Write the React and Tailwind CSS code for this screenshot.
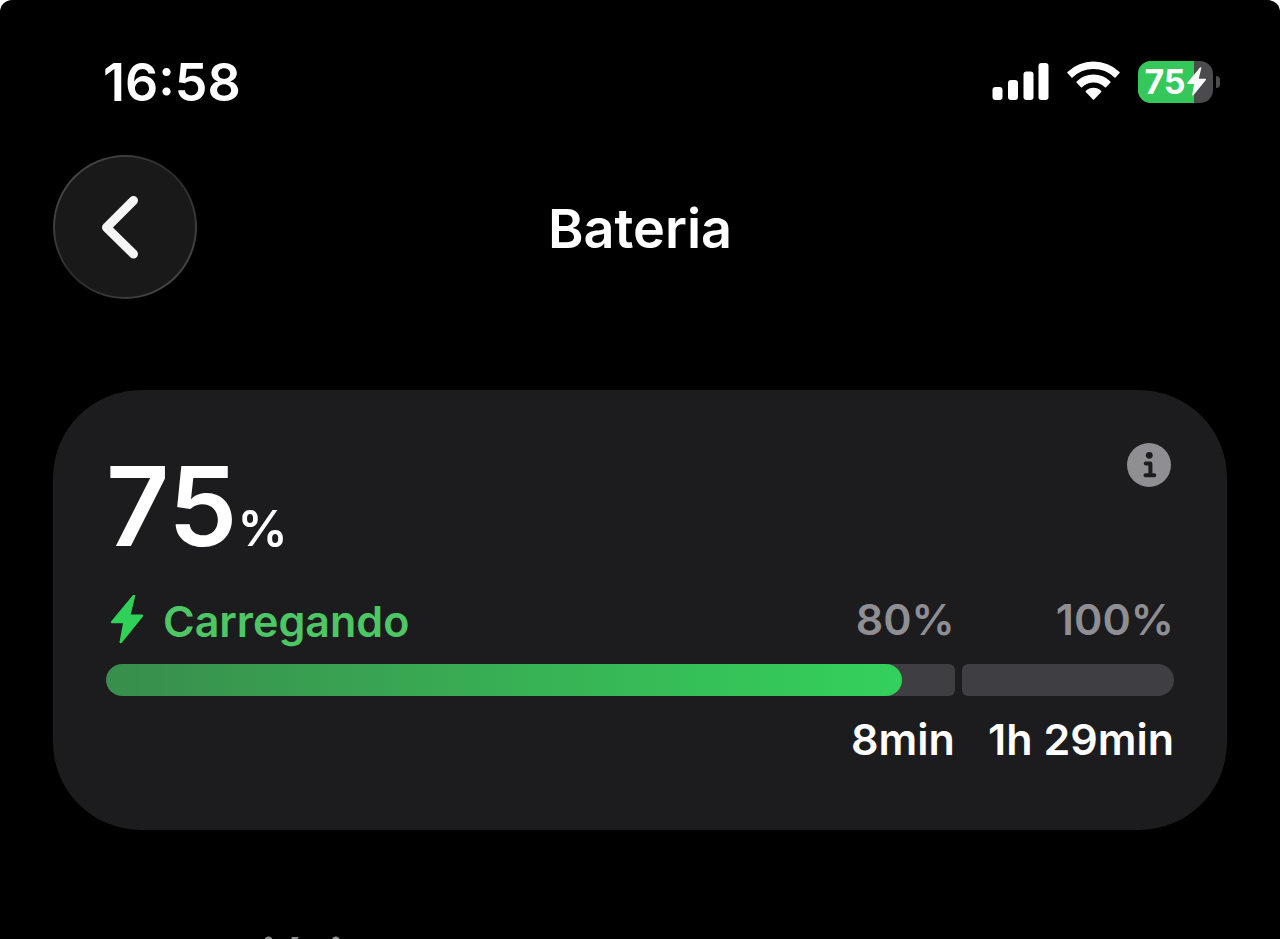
import React from 'react';

const battery = {
    level: 75,
    targets: [
        { limit: 80, time: '8min' },
        { limit: 100, time: '1h 29min' },
    ],
};

function SignalIcon() {
    return (
        <svg width="57" height="40" viewBox="0 0 57 40" fill="currentColor" aria-hidden="true">
            <rect x="0.5" y="25" width="10" height="13" rx="3" />
            <rect x="16" y="18" width="10" height="20" rx="3" />
            <rect x="31.5" y="9.5" width="10" height="28.5" rx="3" />
            <rect x="46.5" y="1" width="10" height="37" rx="3" />
        </svg>
    );
}

function WifiIcon() {
    return (
        <svg
            width="53"
            height="42"
            viewBox="0 0 53 42"
            fill="currentColor"
            stroke="currentColor"
            strokeWidth="1.5"
            strokeLinejoin="round"
            aria-hidden="true"
        >
            <path d="M1 11.6A36.7 36.7 0 0 1 52 11.6L48 15.9A31 31 0 0 0 5 15.9Z" />
            <path d="M10.1 21A23.6 23.6 0 0 1 42.9 21L38.5 25.8A17 17 0 0 0 14.5 25.8Z" />
            <path d="M19.3 30.5A10.3 10.3 0 0 1 33.7 30.5L26.5 38Z" />
        </svg>
    );
}

function BoltIcon({ className }) {
    return (
        <svg
            className={className}
            viewBox="0 3 36 50"
            fill="currentColor"
            stroke="currentColor"
            strokeWidth="2.5"
            strokeLinejoin="round"
            aria-hidden="true"
        >
            <path d="M25 3.8 3.2 30H15.5L11.8 50 33 23.8H20.2Z" />
        </svg>
    );
}

function BatteryBadge({ level }) {
    return (
        <div className="flex items-center gap-[3px]">
            <div className="relative h-[42px] w-[75px] overflow-hidden rounded-[13px] bg-[#4b4b4d]">
                <div className="h-full bg-[#34c759]" style={{ width: `${level}%` }} />
                <div className="absolute inset-0 flex items-center justify-center">
                    <span className="text-[34px] leading-none font-bold">{level}</span>
                    <BoltIcon className="h-[30px] w-[21px]" />
                </div>
            </div>
            <div className="h-3 w-1 rounded-r-full bg-[#4b4b4d]" />
        </div>
    );
}

function StatusBar() {
    return (
        <div className="flex items-center justify-between pt-[54px] pr-[60px] pl-[103px]">
            <span className="pt-[2px] text-[52px] leading-[54px] font-semibold">16:58</span>
            <div className="flex items-center gap-[18px]">
                <SignalIcon />
                <WifiIcon />
                <BatteryBadge level={battery.level} />
            </div>
        </div>
    );
}

function Header() {
    return (
        <header className="mt-[45px] grid grid-cols-[144px_1fr_144px] items-center px-[53px]">
            <button
                type="button"
                aria-label="Voltar"
                className="size-[144px] rounded-full bg-linear-to-br from-[#505050] via-[#2a2a2a] to-[#505050] p-[2px]"
            >
                <span className="flex size-full items-center justify-center rounded-full bg-[#191919]">
                    <svg width="46" height="70" viewBox="0 0 46 70" fill="none" aria-hidden="true">
                        <path
                            d="M31.5 8.5 4.5 35.5 31.5 62"
                            stroke="#f5f5f5"
                            strokeWidth="9"
                            strokeLinecap="round"
                            strokeLinejoin="round"
                        />
                    </svg>
                </span>
            </button>
            <h1 className="pt-1 text-center text-[54px] leading-[64px] font-semibold">Bateria</h1>
        </header>
    );
}

function InfoButton() {
    return (
        <button type="button" aria-label="Informações" className="mr-[3px] size-11">
            <svg viewBox="0 0 44 44" fill="none" aria-hidden="true">
                <circle cx="22" cy="22" r="22" fill="#8e8e93" />
                <circle cx="22.3" cy="12.3" r="3.4" fill="#1c1c1e" />
                <path
                    d="M18.8 20.5H23.4V32.3M18.5 32.3H27.3"
                    stroke="#1c1c1e"
                    strokeWidth="4"
                    strokeLinecap="round"
                    strokeLinejoin="round"
                />
            </svg>
        </button>
    );
}

function ChargeCard() {
    const [first, last] = battery.targets;

    return (
        <section className="mx-[53px] mt-[91px] rounded-[88px] bg-[#1c1c1e] px-[53px] pt-[53px] pb-[67px]">
            <div className="flex items-start justify-between">
                <p className="flex items-baseline font-semibold">
                    <span className="text-[110px] leading-[126px]">{battery.level}</span>
                    <span className="text-[50px]">%</span>
                </p>
                <InfoButton />
            </div>

            <div className="mt-[26px] grid grid-cols-[minmax(0,4fr)_minmax(0,1fr)] gap-x-[7px] text-[43px] leading-[48px] font-semibold">
                <div className="flex h-[50px] justify-between">
                    <div className="flex items-end gap-[18px] text-[#4cc764]">
                        <BoltIcon className="ml-[3px] h-[50px] w-9 text-[#30d158]" />
                        <span>Carregando</span>
                    </div>
                    <span className="text-[#8e8e93]">{first.limit}%</span>
                </div>
                <span className="text-right text-[#8e8e93]">{last.limit}%</span>

                <div className="mt-[19px] h-8 overflow-hidden rounded-l-[16px] rounded-r-[6px] bg-[#3f3e43]">
                    <div
                        className="h-full rounded-full bg-linear-to-r from-[#388e4c] to-[#33d15b]"
                        style={{ width: `${(battery.level / first.limit) * 100}%` }}
                    />
                </div>
                <div className="mt-[19px] h-8 rounded-l-[6px] rounded-r-[16px] bg-[#3f3e43]" />

                <span className="mt-[19px] text-right">{first.time}</span>
                <span className="mt-[19px] text-right">{last.time}</span>
            </div>
        </section>
    );
}

export default function App() {
    return (
        <main className="h-screen overflow-hidden rounded-t-[12px] bg-black font-['Inter',sans-serif] text-white">
            <StatusBar />
            <Header />
            <ChargeCard />
            <h2 className="mt-[102px] pl-[112px] text-[54px] leading-none font-semibold text-[#8e8e93]">Uso diário</h2>
        </main>
    );
}
